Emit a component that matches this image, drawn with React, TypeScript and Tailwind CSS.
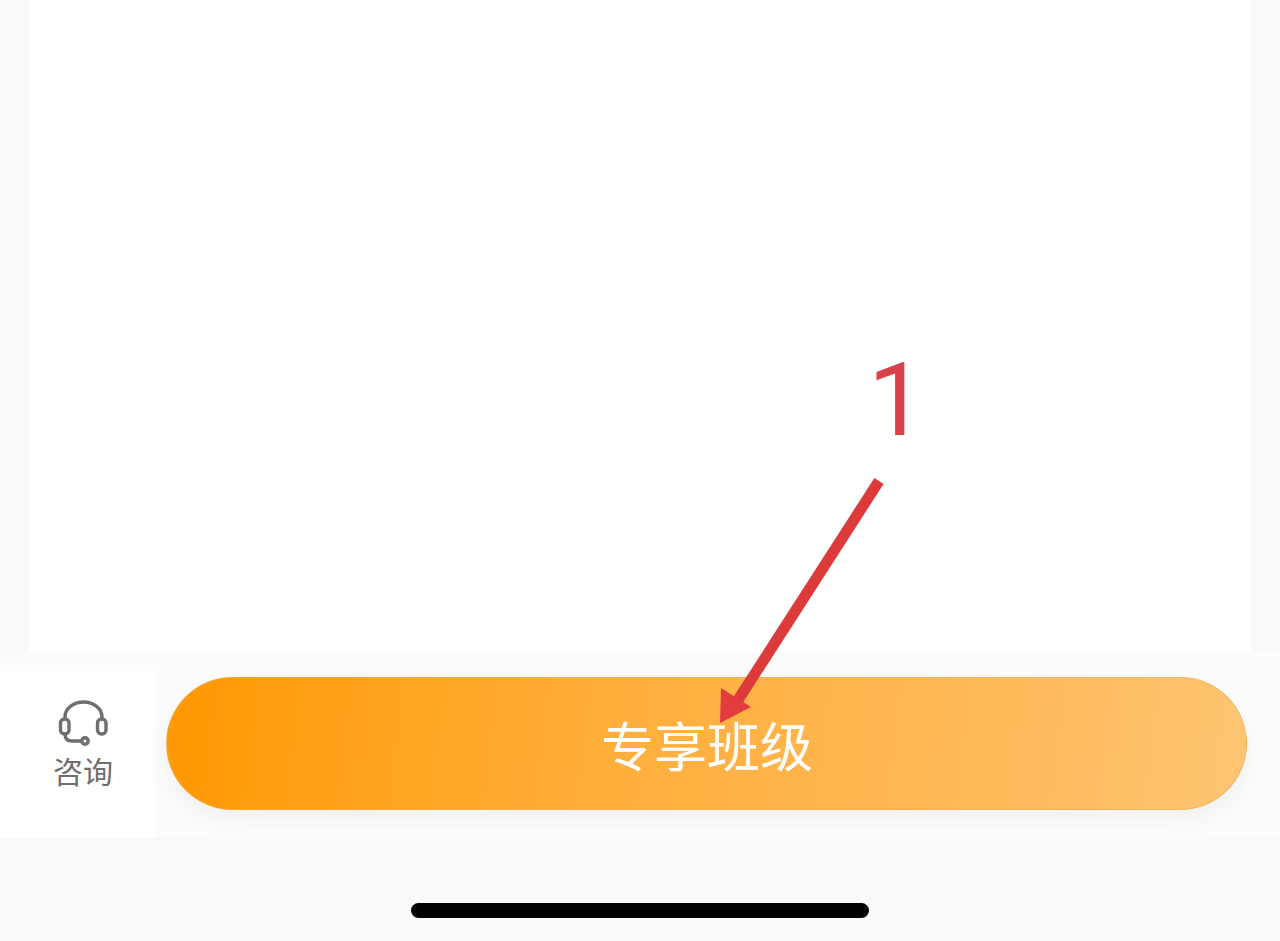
export default function App() {
  return (
    <div
      className="relative flex h-[941px] w-[1280px] flex-col overflow-hidden bg-[#f9f9f9]"
      style={{ fontFamily: '"Noto Sans CJK SC", "Liberation Sans", sans-serif' }}
    >
      {/* content card */}
      <div className="flex h-[652px] shrink-0 px-[29px]">
        <div className="w-full bg-white" />
      </div>

      {/* bottom action bar */}
      <div className="flex h-[186px] shrink-0 items-center bg-[#fcfcfc] pr-[33px]">
        <div className="mr-[11px] flex w-[155px] shrink-0 flex-col items-center self-stretch justify-center bg-gradient-to-b from-[#fafafa] to-white to-[12%] pb-[4px] pl-[11px] text-[#6e6e6e]">
          <svg width="54" height="48" viewBox="0 0 54 48" fill="none" stroke="#6f6f6f" strokeWidth="3.4" strokeLinecap="round" strokeLinejoin="round">
            <path d="M9 20 V18 A18.5 15 0 0 1 46 18 V20" />
            <rect x="4.5" y="20" width="8.5" height="15" rx="4" />
            <rect x="41.5" y="20" width="8.5" height="15" rx="4" />
            <path d="M9 35 Q9 42 16 42 H25.5" />
            <circle cx="29" cy="42" r="3.2" />
          </svg>
          <span className="mt-[6px] text-[30px] leading-[34px] font-normal">咨询</span>
        </div>
        <button className="mb-[3px] flex h-[133px] flex-1 items-center justify-center rounded-full border border-[#e8b060]/60 bg-[linear-gradient(97deg,#ff9a06_4%,#ffae3a_40%,#ffbb5c_80%,#ffc573_100%)] pl-[1px] pt-[2px] text-[53px] leading-none font-normal text-white shadow-[0_10px_26px_rgba(0,0,0,0.05)]">
          专享班级
        </button>
      </div>

      {/* home indicator */}
      <div className="flex flex-1 justify-center pt-[65px]">
        <div className="h-[15px] w-[458px] rounded-full bg-black" />
      </div>

      {/* annotation over the page */}
      <span className="absolute left-[868px] top-[340px] text-[102px] leading-[120px] font-normal text-[#d8434a]" style={{ fontFamily: 'Roboto, sans-serif' }}>
        1
      </span>
      <svg className="absolute left-[700px] top-[470px]" width="200" height="260" viewBox="0 0 200 260">
        <path d="M179 11 L38 230" stroke="#dd3b3b" strokeWidth="11" fill="none" />
        <path d="M21 218 L20 253 L51 237 Z" fill="#e23c3c" />
      </svg>
    </div>
  );
}
